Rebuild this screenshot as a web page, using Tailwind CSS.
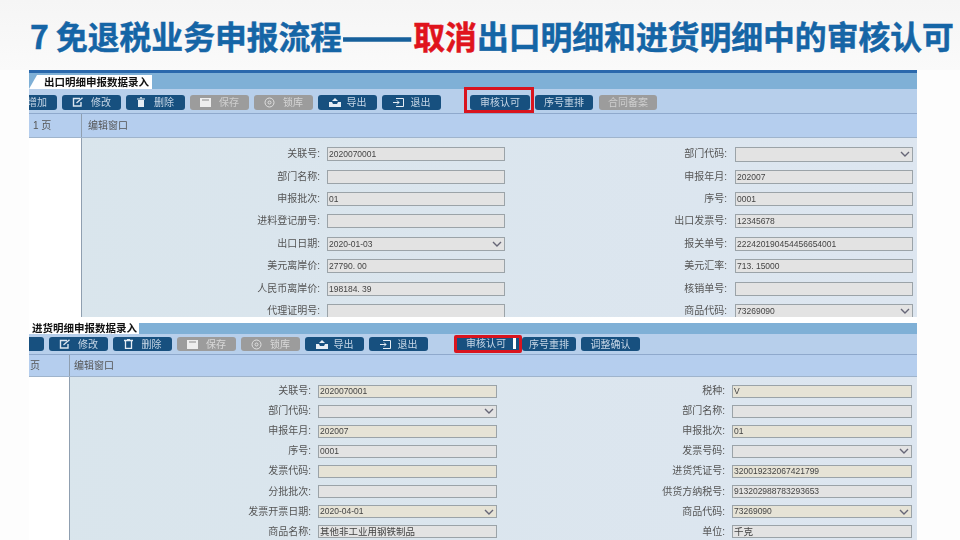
<!DOCTYPE html>
<html lang="zh">
<head>
  <meta charset="UTF-8">
  <title>免退税业务申报流程</title>
  <script src="https://cdn.jsdelivr.net/npm/@tailwindcss/browser@4"></script>
</head>
<body class="w-[960px] h-[540px] overflow-hidden bg-[#fdfdfd] font-['Liberation_Sans','Noto_Sans_CJK_SC',sans-serif]">
  <!-- 标题 -->
  <div class="h-[70px] pl-[30px] pt-[11px] bg-gradient-to-b from-[#f5f5f5] to-[#fafafa] whitespace-nowrap">
    <h1 class="text-[31.8px] leading-[48px] font-bold text-[#1565a6] [-webkit-text-stroke:0.5px_#1565a6] font-['Noto_Sans_CJK_SC',sans-serif]">7 免退税业务申报流程<span class="inline-block origin-left scale-x-[1.3] mr-[17px] text-[#17609c] [-webkit-text-stroke:1.5px_#17609c]">——</span><span class="text-[#e0141c] [-webkit-text-stroke:0.5px_#e0141c]">取消</span>出口明细和进货明细中的审核认可</h1>
  </div>

  <div class="ml-[29px] w-[888px] blur-[0.5px]">
    <!-- 出口明细 -->
    <section class="h-[247px] overflow-hidden flex flex-col bg-gradient-to-r from-[#d9e5ec] to-[#dde6f0]">
      <div class="h-[19px] shrink-0 border-t-[3px] border-[#2a68ac] bg-[#7fb0d6] flex items-end">
        <div class="h-[14px] w-[123px] bg-white text-[10.5px] leading-[14px] font-bold text-[#111] pl-[15px] whitespace-nowrap [clip-path:polygon(8px_0,100%_0,100%_100%,0_100%)]">出口明细申报数据录入</div>
      </div>
      <div class="h-[25px] shrink-0 bg-[#b7cfeb] border-b border-[#8fa9cc] flex items-center pt-[2px] text-[10px] text-[#c6d6e6]">
        <div class="w-[28px] h-[15px] rounded-r-[3px] bg-[#17507f] flex justify-end items-center pr-[10px] overflow-hidden whitespace-nowrap">增加</div>
        <button class="ml-[5px] w-[59px] h-[15px] rounded-[3px] bg-[#17507f] flex items-center justify-center gap-[7px] text-[#c6d6e6]"><svg width="12" height="10" viewBox="0 0 12 10" fill="none" stroke="#dce6f0" stroke-width="1.4"><path d="M8 1.5H1.5v7.5H9V5"/><path d="M4.5 6L10.5 .8"/></svg>修改</button>
        <button class="ml-[5px] w-[59px] h-[15px] rounded-[3px] bg-[#17507f] flex items-center justify-center gap-[9px] text-[#c6d6e6]"><svg width="8" height="10" viewBox="0 0 8 10" fill="#e6edf4"><path d="M0 1.5h8v1H0zM3 .2h2v1H3zM1 3h6v7H1z"/></svg>删除</button>
        <button class="ml-[5px] w-[59px] h-[15px] rounded-[3px] bg-[#9c9c9c] flex items-center justify-center gap-[8px] text-[#cfcfcf]"><svg width="11" height="9" viewBox="0 0 11 9" fill="#eeeeee"><path d="M0 0h11v9H0z"/><path d="M2 1h7v2H2z" fill="#bdbdbd"/></svg>保存</button>
        <button class="ml-[5px] w-[59px] h-[15px] rounded-[3px] bg-[#9c9c9c] flex items-center justify-center gap-[8px] text-[#d4d4d4]"><svg width="11" height="11" viewBox="0 0 11 11" fill="none" stroke="#e0e0e0"><circle cx="5.5" cy="5.5" r="4.5"/><circle cx="5.5" cy="5.5" r="1.5"/></svg>锁库</button>
        <button class="ml-[5px] w-[59px] h-[15px] rounded-[3px] bg-[#17507f] flex items-center justify-center gap-[6px] text-[#c6d6e6]"><svg width="12" height="9" viewBox="0 0 12 9" fill="#e6edf4"><path d="M0 4h3l1 2h4l1-2h3v5H0z"/><path d="M3 3 6 0l3 3z"/></svg>导出</button>
        <button class="ml-[5px] w-[59px] h-[15px] rounded-[3px] bg-[#17507f] flex items-center justify-center gap-[7px] text-[#c6d6e6]"><svg width="11" height="9" viewBox="0 0 11 9" fill="none" stroke="#e6edf4"><path d="M3 .5h7.5v8H3"/><path d="M0 4.5h6M4 2.5l2 2-2 2"/></svg>退出</button>
        <div class="relative ml-[29px] w-[60px] h-[15px] rounded-[3px] bg-[#17507f] text-center leading-[15px]">审核认可
          <div class="absolute -left-[6px] -right-[4px] -top-[8px] -bottom-[3px] border-[3px] border-[#d9141e]"></div>
        </div>
        <button class="ml-[5px] w-[58px] h-[15px] rounded-[3px] bg-[#17507f] text-[#c6d6e6]">序号重排</button>
        <button class="ml-[6px] w-[58px] h-[15px] rounded-[3px] bg-[#9c9c9c] text-[#cfcfcf]">合同备案</button>
      </div>
      <div class="h-[24px] shrink-0 bg-[#b5ceee] border-b border-[#9fb4cc] flex items-center text-[10px] text-[#555]">
        <div class="w-[52px] pl-[4px]">1 页</div>
        <div class="self-stretch w-px bg-[#8f9fb0]"></div>
        <div class="pl-[6px]">编辑窗口</div>
      </div>
      <div class="flex flex-1 min-h-0">
        <div class="w-[52px] bg-white"></div>
        <div class="w-px bg-[#8f9fb0]"></div>
        <div class="flex-1 grid grid-cols-[245px_178px_230px_178px] auto-rows-[22.4px] pt-[5px] items-center text-[10px] text-[#555] leading-none">
          <div class="text-right pr-[7px]">关联号:</div><div class="h-[14px] pl-[1px] text-[8.5px] bg-[#e3e3e3] border border-[#9ba3a8] leading-[12px] text-[#444]">2020070001</div>
          <div class="text-right pr-[8px]">部门代码:</div><div class="h-[15px] bg-[#e3e3e3] border border-[#9ba3a8] flex items-center justify-end pr-[2px]"><svg width="10" height="6" viewBox="0 0 10 6" fill="none" stroke="#667" stroke-width="1.4"><path d="M1 1l4 4 4-4"/></svg></div>
          <div class="text-right pr-[7px]">部门名称:</div><div class="h-[14px] bg-[#e3e3e3] border border-[#9ba3a8]"></div>
          <div class="text-right pr-[8px]">申报年月:</div><div class="h-[14px] pl-[1px] text-[8.5px] bg-[#e3e3e3] border border-[#9ba3a8] leading-[12px] text-[#444]">202007</div>
          <div class="text-right pr-[7px]">申报批次:</div><div class="h-[14px] pl-[1px] text-[8.5px] bg-[#e3e3e3] border border-[#9ba3a8] leading-[12px] text-[#444]">01</div>
          <div class="text-right pr-[8px]">序号:</div><div class="h-[14px] pl-[1px] text-[8.5px] bg-[#e3e3e3] border border-[#9ba3a8] leading-[12px] text-[#444]">0001</div>
          <div class="text-right pr-[7px]">进料登记册号:</div><div class="h-[14px] bg-[#e3e3e3] border border-[#9ba3a8]"></div>
          <div class="text-right pr-[8px]">出口发票号:</div><div class="h-[14px] pl-[1px] text-[8.5px] bg-[#e3e3e3] border border-[#9ba3a8] leading-[12px] text-[#444]">12345678</div>
          <div class="text-right pr-[7px]">出口日期:</div><div class="h-[14px] pl-[1px] text-[8.5px] bg-[#e3e3e3] border border-[#9ba3a8] flex items-center justify-between pr-[2px] text-[#444]">2020-01-03<svg width="10" height="6" viewBox="0 0 10 6" fill="none" stroke="#667" stroke-width="1.4"><path d="M1 1l4 4 4-4"/></svg></div>
          <div class="text-right pr-[8px]">报关单号:</div><div class="h-[14px] pl-[1px] text-[8.5px] bg-[#e3e3e3] border border-[#9ba3a8] leading-[12px] text-[#444]">222420190454456654001</div>
          <div class="text-right pr-[7px]">美元离岸价:</div><div class="h-[14px] pl-[1px] text-[8.5px] bg-[#e3e3e3] border border-[#9ba3a8] leading-[12px] text-[#444]">27790. 00</div>
          <div class="text-right pr-[8px]">美元汇率:</div><div class="h-[14px] pl-[1px] text-[8.5px] bg-[#e3e3e3] border border-[#9ba3a8] leading-[12px] text-[#444]">713. 15000</div>
          <div class="text-right pr-[7px]">人民币离岸价:</div><div class="h-[14px] pl-[1px] text-[8.5px] bg-[#e3e3e3] border border-[#9ba3a8] leading-[12px] text-[#444]">198184. 39</div>
          <div class="text-right pr-[8px]">核销单号:</div><div class="h-[14px] bg-[#e3e3e3] border border-[#9ba3a8]"></div>
          <div class="text-right pr-[7px]">代理证明号:</div><div class="h-[14px] bg-[#e3e3e3] border border-[#9ba3a8]"></div>
          <div class="text-right pr-[8px]">商品代码:</div><div class="h-[14px] pl-[1px] text-[8.5px] bg-[#e3e3e3] border border-[#9ba3a8] flex items-center justify-between pr-[2px] text-[#444]">73269090<svg width="10" height="6" viewBox="0 0 10 6" fill="none" stroke="#667" stroke-width="1.4"><path d="M1 1l4 4 4-4"/></svg></div>
        </div>
      </div>
    </section>

    <!-- 进货明细 -->
    <section class="h-[223px] overflow-hidden flex flex-col bg-gradient-to-r from-[#d9e5ec] to-[#dde6f0]">
      <div class="h-[6px] shrink-0 bg-white"></div>
      <div class="h-[11px] shrink-0 bg-[#7fb0d6] flex">
        <div class="w-[110px] bg-white text-[10.5px] leading-[11px] font-bold text-[#111] pl-[3px] whitespace-nowrap">进货明细申报数据录入</div>
      </div>
      <div class="h-[21px] shrink-0 bg-[#b7cfeb] border-b border-[#8fa9cc] flex items-center text-[10px] text-[#c6d6e6]">
        <div class="w-[15px] h-[14px] rounded-r-[3px] bg-[#17507f]"></div>
        <button class="ml-[5px] w-[59px] h-[14px] rounded-[3px] bg-[#17507f] flex items-center justify-center gap-[7px] text-[#c6d6e6]"><svg width="12" height="10" viewBox="0 0 12 10" fill="none" stroke="#dce6f0" stroke-width="1.4"><path d="M8 1.5H1.5v7.5H9V5"/><path d="M4.5 6L10.5 .8"/></svg>修改</button>
        <button class="ml-[5px] w-[59px] h-[14px] rounded-[3px] bg-[#17507f] flex items-center justify-center gap-[9px] text-[#c6d6e6]"><svg width="9" height="10" viewBox="0 0 9 10" fill="none" stroke="#e6edf4" stroke-width="1.3"><path d="M0 1.5h9M3 .5h3M1.5 2v7.5h6V2"/></svg>删除</button>
        <button class="ml-[5px] w-[59px] h-[14px] rounded-[3px] bg-[#9c9c9c] flex items-center justify-center gap-[8px] text-[#d8d8d8]"><svg width="11" height="9" viewBox="0 0 11 9" fill="#eeeeee"><path d="M0 0h11v9H0z"/><path d="M2 1h7v2H2z" fill="#bdbdbd"/></svg>保存</button>
        <button class="ml-[5px] w-[59px] h-[14px] rounded-[3px] bg-[#9c9c9c] flex items-center justify-center gap-[8px] text-[#d8d8d8]"><svg width="11" height="11" viewBox="0 0 11 11" fill="none" stroke="#e0e0e0"><circle cx="5.5" cy="5.5" r="4.5"/><circle cx="5.5" cy="5.5" r="1.5"/></svg>锁库</button>
        <button class="ml-[5px] w-[59px] h-[14px] rounded-[3px] bg-[#17507f] flex items-center justify-center gap-[6px] text-[#c6d6e6]"><svg width="12" height="9" viewBox="0 0 12 9" fill="#e6edf4"><path d="M0 4h3l1 2h4l1-2h3v5H0z"/><path d="M3 3 6 0l3 3z"/></svg>导出</button>
        <button class="ml-[5px] w-[59px] h-[14px] rounded-[3px] bg-[#17507f] flex items-center justify-center gap-[7px] text-[#c6d6e6]"><svg width="11" height="9" viewBox="0 0 11 9" fill="none" stroke="#e6edf4"><path d="M3 .5h7.5v8H3"/><path d="M0 4.5h6M4 2.5l2 2-2 2"/></svg>退出</button>
        <div class="relative ml-[28px] w-[63px] h-[14px] bg-[#17507f] pl-[10px] leading-[14px]">审核认可
          <div class="absolute right-[3px] top-[1px] w-[3px] h-[11px] bg-white"></div>
          <div class="absolute -left-[2px] -right-[3px] -top-[2px] -bottom-[2px] border-[3px] border-[#d9141e] rounded-[2px]"></div>
        </div>
        <button class="ml-[3px] w-[54px] h-[14px] rounded-[3px] bg-[#17507f] text-[#c6d6e6]">序号重排</button>
        <button class="ml-[5px] w-[59px] h-[14px] rounded-[3px] bg-[#17507f] text-[#c6d6e6]">调整确认</button>
      </div>
      <div class="h-[22px] shrink-0 bg-[#b5ceee] border-b border-[#9fb4cc] flex items-center text-[10px] text-[#555]">
        <div class="w-[40px] pl-[1px]">页</div>
        <div class="self-stretch w-px bg-[#8f9fb0]"></div>
        <div class="pl-[4px]">编辑窗口</div>
      </div>
      <div class="flex flex-1 min-h-0">
        <div class="w-[40px] bg-white"></div>
        <div class="w-px bg-[#8f9fb0]"></div>
        <div class="flex-1 grid grid-cols-[248px_179px_235px_180px] auto-rows-[20.1px] pt-[4px] items-center text-[10px] text-[#555] leading-none">
          <div class="text-right pr-[7px]">关联号:</div><div class="h-[13px] pl-[1px] text-[8.5px] bg-[#e6e3d6] border border-[#9ba3a8] leading-[11px] text-[#444]">2020070001</div>
          <div class="text-right pr-[7px]">税种:</div><div class="h-[13px] pl-[1px] text-[8.5px] bg-[#e6e3d6] border border-[#9ba3a8] leading-[11px] text-[#444]">V</div>
          <div class="text-right pr-[7px]">部门代码:</div><div class="h-[13px] bg-[#e3e3e3] border border-[#9ba3a8] flex items-center justify-end pr-[2px]"><svg width="10" height="6" viewBox="0 0 10 6" fill="none" stroke="#667" stroke-width="1.4"><path d="M1 1l4 4 4-4"/></svg></div>
          <div class="text-right pr-[7px]">部门名称:</div><div class="h-[13px] bg-[#e3e3e3] border border-[#9ba3a8]"></div>
          <div class="text-right pr-[7px]">申报年月:</div><div class="h-[13px] pl-[1px] text-[8.5px] bg-[#e6e3d6] border border-[#9ba3a8] leading-[11px] text-[#444]">202007</div>
          <div class="text-right pr-[7px]">申报批次:</div><div class="h-[13px] pl-[1px] text-[8.5px] bg-[#e6e3d6] border border-[#9ba3a8] leading-[11px] text-[#444]">01</div>
          <div class="text-right pr-[7px]">序号:</div><div class="h-[13px] pl-[1px] text-[8.5px] bg-[#e3e3e3] border border-[#9ba3a8] leading-[11px] text-[#444]">0001</div>
          <div class="text-right pr-[7px]">发票号码:</div><div class="h-[13px] bg-[#e3e3e3] border border-[#9ba3a8] flex items-center justify-end pr-[2px]"><svg width="10" height="6" viewBox="0 0 10 6" fill="none" stroke="#667" stroke-width="1.4"><path d="M1 1l4 4 4-4"/></svg></div>
          <div class="text-right pr-[7px]">发票代码:</div><div class="h-[13px] bg-[#e6e3d6] border border-[#9ba3a8]"></div>
          <div class="text-right pr-[7px]">进货凭证号:</div><div class="h-[13px] pl-[1px] text-[8.5px] bg-[#e6e3d6] border border-[#9ba3a8] leading-[11px] text-[#444]">320019232067421799</div>
          <div class="text-right pr-[7px]">分批批次:</div><div class="h-[13px] bg-[#e3e3e3] border border-[#9ba3a8]"></div>
          <div class="text-right pr-[7px]">供货方纳税号:</div><div class="h-[13px] pl-[1px] text-[8.5px] bg-[#e3e3e3] border border-[#9ba3a8] leading-[11px] text-[#444]">913202988783293653</div>
          <div class="text-right pr-[7px]">发票开票日期:</div><div class="h-[13px] pl-[1px] text-[8.5px] bg-[#e6e3d6] border border-[#9ba3a8] flex items-center justify-between pr-[2px] text-[#444]">2020-04-01<svg width="10" height="6" viewBox="0 0 10 6" fill="none" stroke="#667" stroke-width="1.4"><path d="M1 1l4 4 4-4"/></svg></div>
          <div class="text-right pr-[7px]">商品代码:</div><div class="h-[13px] pl-[1px] text-[8.5px] bg-[#e6e3d6] border border-[#9ba3a8] flex items-center justify-between pr-[2px] text-[#444]">73269090<svg width="10" height="6" viewBox="0 0 10 6" fill="none" stroke="#667" stroke-width="1.4"><path d="M1 1l4 4 4-4"/></svg></div>
          <div class="text-right pr-[7px]">商品名称:</div><div class="h-[13px] pl-[1px] text-[9.5px] bg-[#e3e3e3] border border-[#9ba3a8] leading-[11px] text-[#444]">其他非工业用钢铁制品</div>
          <div class="text-right pr-[7px]">单位:</div><div class="h-[13px] pl-[1px] text-[9.5px] bg-[#e3e3e3] border border-[#9ba3a8] leading-[11px] text-[#444]">千克</div>
        </div>
      </div>
    </section>
  </div>
</body>
</html>
